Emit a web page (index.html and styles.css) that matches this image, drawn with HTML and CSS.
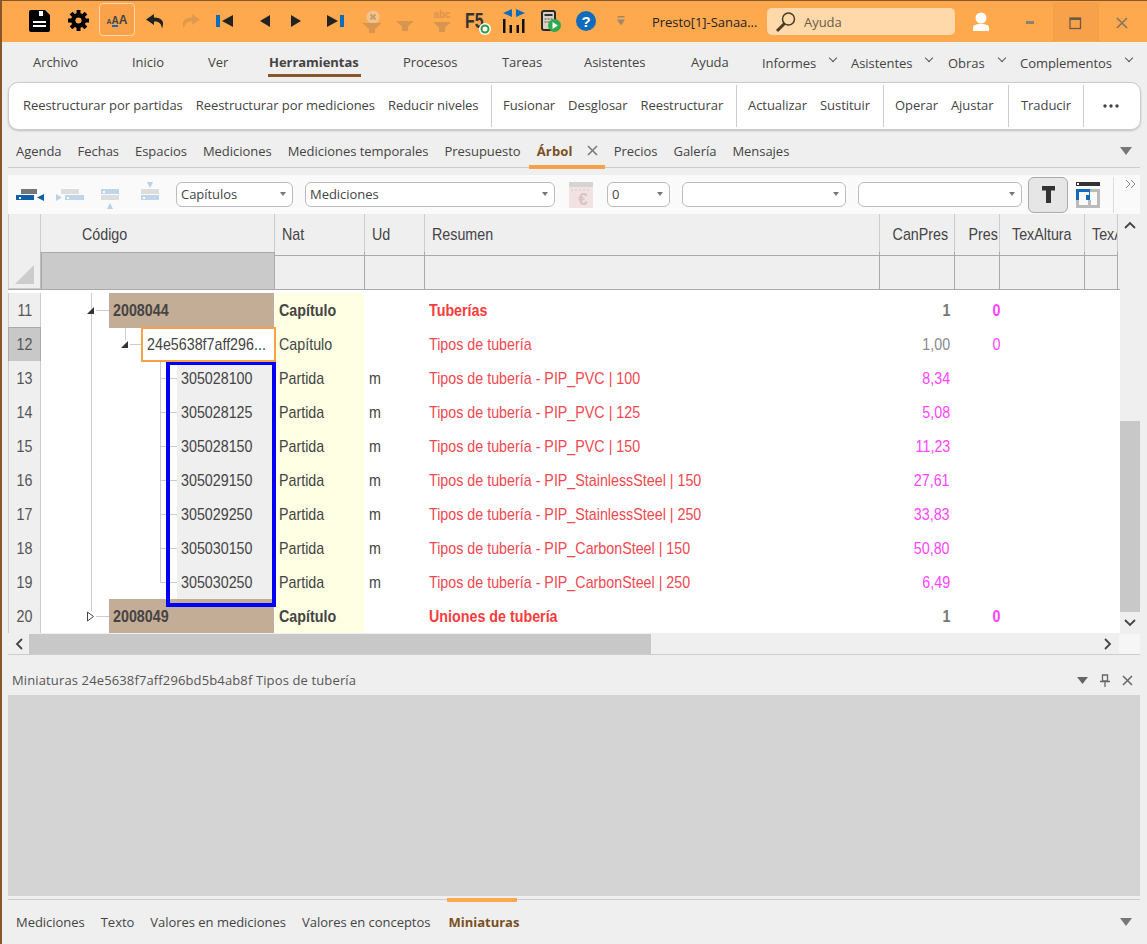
FILE: index.html
```html
<!DOCTYPE html>
<html lang="es">

<head>
    <meta charset="UTF-8">
    <title>Presto</title>
    <link rel="stylesheet" href="styles.css">
</head>

<body>
    <!-- title bar -->
    <header class="titlebar">
        <div class="quick-icons">
            <svg width="21" height="22" viewBox="0 0 21 22"><path d="M2 0h14l5 5v15a2 2 0 0 1-2 2H2a2 2 0 0 1-2-2V2a2 2 0 0 1 2-2z" fill="#000"/><rect x="10" y="1" width="4" height="5" fill="#fff"/><rect x="4" y="11" width="13" height="2" fill="#fff"/><rect x="4" y="15" width="13" height="2" fill="#fff"/></svg>
            <svg width="21" height="21" viewBox="0 0 24 24"><circle cx="12" cy="12" r="6" fill="none" stroke="#000" stroke-width="5"/><path d="M12 0v6M12 18v6M0 12h6M18 12h6M3.500 3.500l4 4M16.500 16.500l4 4M20.500 3.500l-4 4M7.500 16.500l-4 4" stroke="#000" stroke-width="4.500"/></svg>
            <div class="font-btn"><span class="aa1">A</span><span class="aa2">A</span><span class="aa3">A</span></div>
            <svg width="19" height="16" viewBox="0 0 19 16"><path d="M8 1 0 6.500 8 12V8.500c5 0 7 1.500 8 7 3-7 0-11-8-11z" fill="#222"/></svg>
            <svg width="19" height="16" viewBox="0 0 19 16"><path d="M11 1l8 5.500L11 12V8.500c-5 0-7 1.500-8 7-3-7 0-11 8-11z" fill="#e09a50"/></svg>
            <svg width="18" height="14" viewBox="0 0 18 14"><rect x="0" y="1" width="4" height="12" fill="#0f6cbd"/><path d="M17 1v12L6 7z" fill="#222"/></svg>
            <svg width="12" height="14" viewBox="0 0 12 14"><path d="M11 1v12L1 7z" fill="#222"/></svg>
            <svg width="12" height="14" viewBox="0 0 12 14"><path d="M1 1v12l10-6z" fill="#222"/></svg>
            <svg width="18" height="14" viewBox="0 0 18 14"><path d="M1 1v12l11-6z" fill="#222"/><rect x="14" y="1" width="4" height="12" fill="#0f6cbd"/></svg>
            <svg class="filter-x" width="20" height="24" viewBox="0 0 20 24"><circle cx="11" cy="7" r="6.500" fill="#eec592"/><path d="M8.500 4.500l5 5M13.500 4.500l-5 5" stroke="#cf9a60" stroke-width="2"/><path d="M0 13h20l-7 6v4H7v-4z" fill="#d8954f"/></svg>
            <svg class="filter-plain" width="18" height="10" viewBox="0 0 18 10"><path d="M0 0h18l-6 5.500V10H6V5.500z" fill="#d8954f"/></svg>
            <div class="abc-filter"><span class="abc">abc</span><svg width="18" height="10" viewBox="0 0 18 10"><path d="M0 0h18l-6 5.500V10H6V5.500z" fill="#d8954f"/></svg></div>
            <div class="f5"><span>F5</span><svg class="f5-badge" width="12" height="12" viewBox="0 0 12 12"><circle cx="6" cy="6" r="6" fill="#fff"/><circle cx="6" cy="6" r="3.500" fill="none" stroke="#2e9e3f" stroke-width="2"/></svg></div>
            <svg width="24" height="24" viewBox="0 0 24 24"><path d="M10 0v8L1 4zM14 0v8l9-4z" fill="#0f6cbd"/><path d="M1 10h2.500v14H1zM7.500 16H10v8H7.500zM14.500 16H17v8h-2.500zM20 10h2.500v14H20z" fill="#111"/></svg>
            <svg width="20" height="22" viewBox="0 0 20 22"><rect x="1" y="1" width="13" height="19" rx="2" fill="#d9d0c4" stroke="#2a2a2a" stroke-width="2"/><rect x="3.500" y="4" width="8" height="2" fill="#333"/><path d="M3.500 9h8M3.500 12h8" stroke="#555" stroke-dasharray="2 1"/><circle cx="13.500" cy="15.500" r="6.500" fill="#2fa84f"/><path d="M11.500 12v7l5.500-3.500z" fill="#fff"/></svg>
            <svg width="20" height="20" viewBox="0 0 20 20"><circle cx="10" cy="10" r="10" fill="#0f6cbd"/><text x="10" y="15.500" class="help-q">?</text></svg>
            <svg width="8" height="10" viewBox="0 0 8 10"><rect x="0.500" y="0" width="7" height="1.500" fill="#9a8a70"/><path d="M0 3.500h8L4 9.500z" fill="#9a8a70"/></svg>
        </div>
        <div class="doc-title">Presto[1]-Sanaa...</div>
        <div class="search">
            <svg width="22" height="22" viewBox="0 0 22 22"><circle cx="13.500" cy="8" r="6" fill="none" stroke="#4a3a28" stroke-width="1.500"/><path d="M9.500 12.500 2 20" stroke="#4a3a28" stroke-width="3"/></svg>
            <span>Ayuda</span>
        </div>
        <svg class="user-icon" width="18" height="20" viewBox="0 0 18 20"><circle cx="9" cy="6" r="5.500" fill="#fff"/><path d="M1 19v-3c0-3 3-4 8-4s8 1 8 4v3z" fill="#fff"/></svg>
        <div class="win-btn"><svg width="10" height="4" viewBox="0 0 10 4"><rect width="8" height="3" x="1" fill="#8d8172"/></svg></div>
        <div class="win-btn win-max"><svg width="14" height="13" viewBox="0 0 14 13"><rect x="1" y="1" width="10.500" height="10.500" fill="none" stroke="#6e5a43" stroke-width="1.300"/><rect x="1" y="1" width="10.500" height="2" fill="#6e5a43"/></svg></div>
        <div class="win-btn"><svg width="12" height="12" viewBox="0 0 12 12"><path d="M1 1l10 10M11 1 1 11" stroke="#857560" stroke-width="1.600"/></svg></div>
    </header>

    <!-- main menu -->
    <nav class="menu">
        <span>Archivo</span>
        <span>Inicio</span>
        <span>Ver</span>
        <span><b class="menu-active">Herramientas</b></span>
        <span>Procesos</span>
        <span>Tareas</span>
        <span>Asistentes</span>
        <span>Ayuda</span>
        <span class="menu-drop">Informes</span>
        <span class="menu-drop">Asistentes</span>
        <span class="menu-drop">Obras</span>
        <span class="menu-drop">Complementos</span>
    </nav>

    <!-- ribbon -->
    <div class="ribbon">
        <div class="ribbon-group group-a">
            <span>Reestructurar por partidas</span>
            <span>Reestructurar por mediciones</span>
            <span>Reducir niveles</span>
        </div>
        <div class="ribbon-group group-b">
            <span>Fusionar</span>
            <span>Desglosar</span>
            <span>Reestructurar</span>
        </div>
        <div class="ribbon-group group-c">
            <span>Actualizar</span>
            <span>Sustituir</span>
        </div>
        <div class="ribbon-group group-d">
            <span>Operar</span>
            <span>Ajustar</span>
        </div>
        <div class="ribbon-group group-e">
            <span>Traducir</span>
        </div>
        <div class="ribbon-more">
            <svg width="16" height="4" viewBox="0 0 16 4"><circle cx="2" cy="2" r="1.700" fill="#444"/><circle cx="8" cy="2" r="1.700" fill="#444"/><circle cx="14" cy="2" r="1.700" fill="#444"/></svg>
        </div>
    </div>

    <!-- document tabs -->
    <div class="tabs tabs-top">
        <span>Agenda</span>
        <span>Fechas</span>
        <span>Espacios</span>
        <span>Mediciones</span>
        <span>Mediciones temporales</span>
        <span>Presupuesto</span>
        <span class="tab-active"><b>Árbol</b><svg width="11" height="11" viewBox="0 0 11 11"><path d="M1 1l9 9M10 1l-9 9" stroke="#777" stroke-width="1.500"/></svg></span>
        <span>Precios</span>
        <span>Galería</span>
        <span>Mensajes</span>
        <svg class="tabs-arrow" width="14" height="8" viewBox="0 0 14 8"><path d="M1 0h12L7 8z" fill="#777"/></svg>
    </div>

    <!-- grid toolbar -->
    <div class="toolbar">
        <svg class="tool-1" width="28" height="29" viewBox="0 0 28 29"><rect x="5" y="9" width="16" height="5" fill="#777"/><rect y="15" width="18" height="5" fill="#0f5fa8"/><rect x="3" y="17" width="2" height="2" fill="#fff"/><path d="M28 14v7l-7-3.500z" fill="#0f5fa8"/></svg>
        <svg class="tool-2" width="28" height="29" viewBox="0 0 28 29"><rect x="5" y="9" width="18" height="5" fill="#ddd"/><path d="M0 14v7l6-3.500z" fill="#b8d3e8"/><rect x="9" y="15" width="19" height="5" fill="#bfd6ea"/><rect x="11" y="17" width="2" height="2" fill="#fff"/></svg>
        <svg class="tool-3" width="18" height="29" viewBox="0 0 18 29"><rect y="9" width="18" height="5" fill="#bfd6ea"/><rect x="2" y="11" width="2" height="2" fill="#fff"/><rect y="15" width="18" height="5" fill="#ddd"/><path d="M6 29l3-6 3 6z" fill="#b8d3e8"/></svg>
        <svg class="tool-4" width="18" height="29" viewBox="0 0 18 29"><path d="M6 2h6L9 8z" fill="#b8d3e8"/><rect y="9" width="18" height="5" fill="#ddd"/><rect y="15" width="18" height="5" fill="#bfd6ea"/><rect x="2" y="17" width="2" height="2" fill="#fff"/></svg>
        <div class="select select-cap">Capítulos</div>
        <div class="select select-med">Mediciones</div>
        <svg class="tool-euro" width="24" height="26" viewBox="0 0 24 26"><rect width="24" height="26" fill="#f3e2e2"/><rect width="24" height="5" fill="#d4d4d4"/><path d="M2 8h20" stroke="#ccc" stroke-dasharray="2 2"/><text x="14" y="23" class="euro">€</text></svg>
        <div class="select select-num">0</div>
        <div class="select select-wide"></div>
        <div class="select select-wide"></div>
        <div class="t-btn">
            <svg width="13" height="17" viewBox="0 0 13 17"><path d="M0 0h13v4.500H9V17H4V4.500H0z" fill="#333"/></svg>
        </div>
        <svg class="tool-view" width="24" height="26" viewBox="0 0 24 26"><rect width="24" height="4" fill="#333"/><rect x="1" y="1" width="2" height="2" fill="#fff"/><path d="M0 18h3v5h9v-5h3v5h6V10h-7V7h10v19H0z" fill="#bbb"/><path d="M0 7h14v11h-4v-5h3v-3H3v8H0z" fill="#0f6cbd"/></svg>
        <div class="tool-sep"></div>
        <svg class="tool-more" width="12" height="10" viewBox="0 0 12 10"><path d="M1 1l4 4-4 4M6 1l4 4-4 4" fill="none" stroke="#888"/></svg>
    </div>

    <!-- tree grid -->
    <div class="grid-area">
        <div class="grid-main">
            <div class="grid-row grid-head">
                <div class="row-num"></div>
                <div class="col-code"><span class="t">Código</span></div>
                <div><span class="t">Nat</span></div>
                <div><span class="t">Ud</span></div>
                <div><span class="t">Resumen</span></div>
                <div class="num"><span class="t">CanPres</span></div>
                <div class="num num-pres"><span class="t">Pres</span></div>
                <div class="tex tex-first"><span class="t">TexAltura</span></div>
                <div class="tex"><span class="t">TexA</span></div>
            </div>
            <div class="grid-row grid-filter">
                <div class="row-num corner"><svg width="19" height="19" viewBox="0 0 19 19"><path d="M19 0v19H0z" fill="#ccc"/></svg></div>
                <div class="filter-code"></div>
                <div></div>
                <div></div>
                <div></div>
                <div></div>
                <div></div>
                <div></div>
                <div></div>
            </div>

            <div class="grid-body">
                <div class="tree-line v-main"></div>
                <div class="tree-line v-sub"></div>
                <div class="tree-line v-leaf"></div>

                <div class="grid-row row-chapter">
                    <div class="row-num"><span class="t">11</span></div>
                    <div class="code-cell level-1"><i class="twist"></i><i class="stub"></i><span class="code-box chapter-box"><span class="t">2008044</span></span></div>
                    <div class="nat"><span class="t">Capítulo</span></div>
                    <div></div>
                    <div class="res"><span class="t">Tuberías</span></div>
                    <div class="num can"><span class="t">1</span></div>
                    <div class="num pres"><span class="t">0</span></div>
                </div>
                <div class="grid-row row-sub">
                    <div class="row-num row-num-sel"><span class="t">12</span></div>
                    <div class="code-cell level-2"><i class="twist"></i><i class="stub"></i><span class="code-box selected-box"><span class="t">24e5638f7aff296...</span></span></div>
                    <div class="nat"><span class="t">Capítulo</span></div>
                    <div></div>
                    <div class="res"><span class="t">Tipos de tubería</span></div>
                    <div class="num can"><span class="t">1,00</span></div>
                    <div class="num pres"><span class="t">0</span></div>
                </div>
                <div class="grid-row">
                    <div class="row-num"><span class="t">13</span></div>
                    <div class="code-cell level-3"><i class="stub"></i><span class="code-box leaf-box"><span class="t">305028100</span></span></div>
                    <div class="nat"><span class="t">Partida</span></div>
                    <div class="ud"><span class="t">m</span></div>
                    <div class="res"><span class="t">Tipos de tubería - PIP_PVC | 100</span></div>
                    <div class="num can-leaf"><span class="t">8,34</span></div>
                    <div></div>
                </div>
                <div class="grid-row">
                    <div class="row-num"><span class="t">14</span></div>
                    <div class="code-cell level-3"><i class="stub"></i><span class="code-box leaf-box"><span class="t">305028125</span></span></div>
                    <div class="nat"><span class="t">Partida</span></div>
                    <div class="ud"><span class="t">m</span></div>
                    <div class="res"><span class="t">Tipos de tubería - PIP_PVC | 125</span></div>
                    <div class="num can-leaf"><span class="t">5,08</span></div>
                    <div></div>
                </div>
                <div class="grid-row">
                    <div class="row-num"><span class="t">15</span></div>
                    <div class="code-cell level-3"><i class="stub"></i><span class="code-box leaf-box"><span class="t">305028150</span></span></div>
                    <div class="nat"><span class="t">Partida</span></div>
                    <div class="ud"><span class="t">m</span></div>
                    <div class="res"><span class="t">Tipos de tubería - PIP_PVC | 150</span></div>
                    <div class="num can-leaf"><span class="t">11,23</span></div>
                    <div></div>
                </div>
                <div class="grid-row">
                    <div class="row-num"><span class="t">16</span></div>
                    <div class="code-cell level-3"><i class="stub"></i><span class="code-box leaf-box"><span class="t">305029150</span></span></div>
                    <div class="nat"><span class="t">Partida</span></div>
                    <div class="ud"><span class="t">m</span></div>
                    <div class="res"><span class="t">Tipos de tubería - PIP_StainlessSteel | 150</span></div>
                    <div class="num can-leaf"><span class="t">27,61</span></div>
                    <div></div>
                </div>
                <div class="grid-row">
                    <div class="row-num"><span class="t">17</span></div>
                    <div class="code-cell level-3"><i class="stub"></i><span class="code-box leaf-box"><span class="t">305029250</span></span></div>
                    <div class="nat"><span class="t">Partida</span></div>
                    <div class="ud"><span class="t">m</span></div>
                    <div class="res"><span class="t">Tipos de tubería - PIP_StainlessSteel | 250</span></div>
                    <div class="num can-leaf"><span class="t">33,83</span></div>
                    <div></div>
                </div>
                <div class="grid-row">
                    <div class="row-num"><span class="t">18</span></div>
                    <div class="code-cell level-3"><i class="stub"></i><span class="code-box leaf-box"><span class="t">305030150</span></span></div>
                    <div class="nat"><span class="t">Partida</span></div>
                    <div class="ud"><span class="t">m</span></div>
                    <div class="res"><span class="t">Tipos de tubería - PIP_CarbonSteel | 150</span></div>
                    <div class="num can-leaf"><span class="t">50,80</span></div>
                    <div></div>
                </div>
                <div class="grid-row">
                    <div class="row-num"><span class="t">19</span></div>
                    <div class="code-cell level-3"><i class="stub"></i><span class="code-box leaf-box"><span class="t">305030250</span></span></div>
                    <div class="nat"><span class="t">Partida</span></div>
                    <div class="ud"><span class="t">m</span></div>
                    <div class="res"><span class="t">Tipos de tubería - PIP_CarbonSteel | 250</span></div>
                    <div class="num can-leaf"><span class="t">6,49</span></div>
                    <div></div>
                </div>
                <div class="grid-row row-chapter">
                    <div class="row-num"><span class="t">20</span></div>
                    <div class="code-cell level-1"><svg class="twist-closed" width="7" height="11" viewBox="0 0 7 11"><path d="M.5 1v9l6-4.500z" fill="#fff" stroke="#444"/></svg><i class="stub"></i><span class="code-box chapter-box"><span class="t">2008049</span></span></div>
                    <div class="nat"><span class="t">Capítulo</span></div>
                    <div></div>
                    <div class="res"><span class="t">Uniones de tubería</span></div>
                    <div class="num can"><span class="t">1</span></div>
                    <div class="num pres"><span class="t">0</span></div>
                </div>

                <!-- annotation drawn on the screenshot -->
                <div class="blue-mark"></div>
            </div>
        </div>

        <div class="vscroll">
            <div class="vscroll-btn"><svg width="12" height="8" viewBox="0 0 12 8"><path d="M1 7l5-5 5 5" fill="none" stroke="#444" stroke-width="1.800"/></svg></div>
            <div class="vscroll-track"><div class="vscroll-thumb"></div></div>
            <div class="vscroll-btn"><svg width="12" height="8" viewBox="0 0 12 8"><path d="M1 1l5 5 5-5" fill="none" stroke="#444" stroke-width="1.800"/></svg></div>
        </div>
    </div>

    <div class="hscroll">
        <div class="hscroll-btn"><svg width="8" height="12" viewBox="0 0 8 12"><path d="M7 1 2 6l5 5" fill="none" stroke="#444" stroke-width="1.800"/></svg></div>
        <div class="hscroll-thumb"></div>
        <div class="hscroll-rest"><svg width="8" height="12" viewBox="0 0 8 12"><path d="M1 1l5 5-5 5" fill="none" stroke="#444" stroke-width="1.800"/></svg></div>
        <div class="hscroll-corner"></div>
    </div>

    <!-- thumbnails panel -->
    <div class="panel-head">
        <span class="panel-title">Miniaturas 24e5638f7aff296bd5b4ab8f Tipos de tubería</span>
        <div class="panel-icons">
            <svg width="11" height="7" viewBox="0 0 11 7"><path d="M0 0h11L5.500 7z" fill="#666"/></svg>
            <svg width="10" height="13" viewBox="0 0 10 13"><path d="M2.500 1h5v6h-5zM0 7.500h10M5 8v5" fill="none" stroke="#666" stroke-width="1.300"/></svg>
            <svg width="11" height="11" viewBox="0 0 11 11"><path d="M1 1l9 9M10 1l-9 9" stroke="#666" stroke-width="1.500"/></svg>
        </div>
    </div>
    <div class="panel-body"></div>

    <div class="tabs tabs-bottom">
        <span>Mediciones</span>
        <span>Texto</span>
        <span>Valores en mediciones</span>
        <span>Valores en conceptos</span>
        <span class="tab-active"><b>Miniaturas</b></span>
        <svg class="tabs-arrow" width="14" height="8" viewBox="0 0 14 8"><path d="M1 0h12L7 8z" fill="#777"/></svg>
    </div>
</body>

</html>
```

FILE: styles.css
```css
html, body {
    margin: 0;
    padding: 0;
}

body {
    width: 1147px;
    height: 944px;
    overflow: hidden;
    box-sizing: border-box;
    border-left: 2px solid #85572a;
    background-color: #efefef;
    font-family: "Open Sans", "Noto Sans", sans-serif;
    font-size: 13px;
    letter-spacing: -0.05px;
    color: #444;
}

svg {
    display: block;
    flex: none;
}

/* title bar */
.titlebar {
    height: 42px;
    box-sizing: border-box;
    border-top: 1px solid #85572a;
    background-color: #ffa94f;
    margin-left: -2px;
    padding-left: 2px;
    display: flex;
    align-items: center;
}

.quick-icons {
    width: 638px;
    height: 41px;
    flex: none;
    display: grid;
    /* columns are sized so each icon centre lands under the original one */
    grid-template-columns: 40px 38px 40px 36px 34px 36px 44px 18px 60px 14px 52px 22px 50px 22px 52px 18px 52px;
    padding: 0 0 2px 17px;
    box-sizing: border-box;
    align-items: center;
    justify-items: center;
}

.font-btn {
    width: 36px;
    height: 33px;
    border: 1px solid #ffd9ad;
    border-radius: 4px;
    background-color: #f9a24a;
    display: flex;
    align-items: baseline;
    justify-content: center;
    line-height: 32px;
    font-family: "Liberation Sans", sans-serif;
    font-weight: bold;
    color: #444;
    box-sizing: border-box;
    background-image: linear-gradient(#0f6cbd, #0f6cbd);
    background-size: 6px 2px;
    background-position: 12px 21px;
    background-repeat: no-repeat;
    margin-bottom: 2px;
}

.aa1 { font-size: 7px; }
.aa2 { font-size: 10px; }
.aa3 { font-size: 12px; }

.filter-plain {
    margin-top: 10px;
}

.filter-x {
    margin-top: 2px;
}

.abc-filter {
    display: flex;
    flex-direction: column;
    align-items: center;
    gap: 2px;
}

.abc {
    font-family: "Liberation Sans", sans-serif;
    font-weight: bold;
    font-size: 10px;
    line-height: 10px;
    color: #d8954f;
}

.f5 {
    position: relative;
    font-family: "Liberation Sans", sans-serif;
    font-weight: bold;
    font-size: 22px;
    line-height: 22px;
    color: #333;
}

.f5 span {
    display: inline-block;
    transform: scaleX(0.72);
    transform-origin: left center;
}

.f5-badge {
    position: absolute;
    right: 0;
    bottom: -3px;
}

.help-q {
    font-family: "Liberation Sans", sans-serif;
    font-weight: bold;
    font-size: 15px;
    fill: #fff;
    text-anchor: middle;
}

.euro {
    font-family: "Liberation Sans", sans-serif;
    font-weight: bold;
    font-size: 17px;
    fill: #d9c3c3;
    text-anchor: middle;
}

.doc-title {
    width: 115px;
    flex: none;
    margin-left: 12px;
    color: #222;
    white-space: nowrap;
}

.search {
    width: 188px;
    height: 27px;
    flex: none;
    box-sizing: border-box;
    background-color: #ffd9aa;
    border-radius: 5px;
    display: flex;
    align-items: center;
    gap: 7px;
    padding-left: 8px;
    color: #6b5a45;
}

.user-icon {
    margin-left: 17px;
    margin-right: 17px;
}

.win-btn {
    width: 46px;
    height: 39px;
    flex: none;
    display: flex;
    align-items: center;
    justify-content: center;
    padding-top: 3px;
    box-sizing: border-box;
}

.win-max {
    background-color: #f7a24a;
}

/* menu */
.menu {
    height: 40px;
    display: grid;
    grid-template-columns: 99px 76px 61px 134px 99px 82px 107px 71px 89px 97px 72px 1fr;
    padding-left: 31px;
    align-items: center;
}

.menu span {
    white-space: nowrap;
    margin-top: -1px;
}

.menu-active {
    display: inline-block;
    position: relative;
}

.menu-active::after {
    content: "";
    position: absolute;
    left: -1px;
    right: -2px;
    bottom: -6px;
    height: 3px;
    background-color: #85572a;
}

.menu .menu-drop {
    margin-top: 1px;
}

.menu-drop::after {
    content: "";
    display: inline-block;
    width: 5px;
    height: 5px;
    border-right: 1.500px solid #555;
    border-bottom: 1.500px solid #555;
    transform: rotate(45deg);
    margin-left: 14px;
    position: relative;
    top: -7px;
}

/* ribbon */
.ribbon {
    height: 48px;
    margin: 0 6px;
    box-sizing: border-box;
    background-color: #fff;
    border: 1px solid #ccc;
    border-radius: 10px;
    box-shadow: 0 1px 2px rgba(0, 0, 0, 0.2);
    display: flex;
    align-items: stretch;
}

.ribbon-group {
    display: flex;
    align-items: center;
    gap: 13px;
    padding: 0 12px 2px 14px;
    white-space: nowrap;
    margin: 2px 0;
    border-right: 1px solid #ccc;
    box-sizing: border-box;
}

.group-a { width: 483px; }
.group-b { width: 245px; padding-left: 11px; }
.group-c { width: 147px; padding-left: 11px; }
.group-d { width: 125px; padding-left: 11px; }
.group-e { width: 75px; padding-left: 12px; }

.ribbon-more {
    flex: 1;
    display: flex;
    align-items: center;
    justify-content: center;
    padding-right: 3px;
}

/* tabs */
.tabs {
    display: flex;
    align-items: center;
    gap: 16px;
    width: 1132px;
    margin-left: 6px;
    padding: 4px 0 0 8px;
    box-sizing: border-box;
    position: relative;
    white-space: nowrap;
    letter-spacing: -0.03px;
}

.tabs-top {
    height: 38px;
    border-bottom: 1px solid #ccc;
}

.tabs .tabs-arrow {
    position: absolute;
    right: 7px;
    top: 50%;
    margin-top: -2px;
}

.tab-active {
    align-self: stretch;
    display: flex;
    align-items: center;
    gap: 14px;
    position: relative;
    color: #7a4f24;
    letter-spacing: 0.2px;
}

.tabs-top .tab-active::after {
    content: "";
    position: absolute;
    left: -8px;
    right: -7px;
    bottom: -2px;
    height: 4px;
    background-color: #f7a24a;
}

.tabs-bottom {
    height: 48px;
    background: linear-gradient(#ccc, #ccc) 0 3px / 100% 1px no-repeat;
}

.tabs-bottom .tab-active {
    letter-spacing: 0;
    margin-left: 2px;
}

.tabs-bottom .tab-active::after {
    content: "";
    position: absolute;
    left: -1px;
    width: 70px;
    top: -2px;
    height: 4px;
    background-color: #ffa94f;
}

/* toolbar */
.toolbar {
    height: 39px;
    margin: 7px 0 0 6px;
    width: 1132px;
    background-color: #fafafa;
    display: flex;
    align-items: center;
    position: relative;
}

.tool-1 { margin-left: 8px; }
.tool-2 { margin-left: 12px; }
.tool-3 { margin-left: 17px; }
.tool-4 { margin-left: 22px; }
.tool-euro { margin-left: 14px; margin-right: 14px; }
.tool-view { margin-left: 8px; }

.select {
    height: 25px;
    box-sizing: border-box;
    border: 1px solid #bbb;
    border-radius: 6px;
    background-color: #fff;
    line-height: 23px;
    padding-left: 4px;
    position: relative;
    color: #444;
}

.select::after {
    content: "";
    position: absolute;
    right: 6px;
    top: 9px;
    border-left: 3px solid transparent;
    border-right: 3px solid transparent;
    border-top: 4px solid #777;
}

.select-cap { width: 117px; margin-left: 17px; }
.select-med { width: 250px; margin-left: 12px; }
.select-num { width: 63px; margin-right: 12px; }
.select-wide { width: 164px; margin-right: 12px; }

.t-btn {
    width: 40px;
    height: 36px;
    margin-left: -6px;
    box-sizing: border-box;
    border: 1px solid #aaa;
    border-radius: 6px;
    background-color: #e6e6e6;
    display: flex;
    align-items: center;
    justify-content: center;
}

.tool-sep {
    width: 1px;
    height: 36px;
    background-color: #ddd;
    margin-left: 13px;
}

.tool-more {
    position: absolute;
    right: 3px;
    top: 4px;
}

/* tree grid */
.grid-area {
    display: flex;
    margin-left: 6px;
    width: 1132px;
    height: 419px;
    background-color: #fff;
}

.grid-main {
    width: 1112px;
    overflow: hidden;
    font-family: "Liberation Sans", sans-serif;
    font-size: 17px;
    letter-spacing: 0;
    color: #444;
}

/* the original grid font is a condensed Arial */
.t {
    display: inline-block;
    transform: scaleX(0.84);
    transform-origin: left center;
}

.num .t {
    transform-origin: right center;
}

.row-num .t {
    transform-origin: center center;
}

.grid-row {
    display: grid;
    grid-template-columns: 33px 234px 90px 60px 455px 75px 45px 85px 33px;
    height: 34px;
}

.grid-row > div {
    box-sizing: border-box;
    line-height: 35px;
    padding-left: 4px;
    white-space: nowrap;
}

.grid-row > .num {
    text-align: right;
    padding-left: 0;
    padding-right: 5px;
}

.grid-row > .pres {
    padding-right: 0;
}

.grid-head {
    height: 38px;
    background-color: #efefef;
}

.grid-row.grid-head > div {
    line-height: 41px;
    padding-left: 7px;
    border-right: 1px solid #ccc;
    border-bottom: 1px solid #aaa;
}

.grid-row.grid-head > .num {
    padding-left: 0;
    padding-right: 6px;
}

.grid-row.grid-head > .num-pres {
    padding-right: 1px;
}

.grid-head > .row-num {
    border-right: 1px solid #bbb;
    border-left: 1px solid #ccc;
    border-bottom: none;
    border-top: 1px solid #ccc;
    padding: 0;
}

.grid-row.grid-head > .col-code {
    padding-left: 41px;
}

.grid-head > .tex {
    overflow: hidden;
}

.grid-row.grid-head > .tex-first {
    padding-left: 12px;
}

.grid-filter {
    height: 38px;
    background-color: #efefef;
    border-bottom: 1px solid #aaa;
    margin-bottom: 3px;
    box-sizing: border-box;
}

.grid-filter > div {
    border-right: 1px solid #aaa;
}

.grid-row.grid-filter > .corner {
    border-left: 1px solid #ccc;
    border-right: 1px solid #bbb;
    padding: 13px 0 0 6px;
}

.grid-filter > .filter-code {
    background-color: #cacaca;
    border: 1px solid #aaa;
    border-bottom: none;
}

.grid-body {
    position: relative;
}

.grid-row > .row-num {
    background-color: #efefef;
    border: 1px solid #ccc;
    border-top: none;
    text-align: center;
    padding: 0;
    color: #555;
}

.grid-row > .row-num-sel {
    background-color: #c8c8c8;
    border: 1px solid #aaa;
    line-height: 33px;
}

.grid-row > .code-cell {
    display: flex;
    align-items: center;
    padding: 0 0 1px 0;
    position: relative;
}

.grid-row > .level-1 { padding-left: 46px; }
.grid-row > .level-2 { padding-left: 80px; }
.grid-row > .level-3 { padding-left: 119px; }

.twist {
    width: 0;
    height: 0;
    flex: none;
    margin-right: 2px;
    border-left: 7px solid transparent;
    border-bottom: 7px solid #333;
}

.twist-closed {
    margin-right: 2px;
}

.stub {
    height: 1px;
    flex: none;
    width: 11px;
    background-color: #ccc;
}

.level-1 .stub {
    width: 13px;
}

.level-3 .stub {
    width: 17px;
}

.code-box {
    height: 100%;
    box-sizing: border-box;
    display: block;
    line-height: 35px;
    white-space: nowrap;
    padding-left: 4px;
}

.chapter-box {
    width: 165px;
    background-color: #c4ad96;
    font-weight: bold;
}

.selected-box {
    width: 135px;
    height: 35px;
    margin: -1px -2px 0 0;
    background-color: #fff;
    border: 2px solid #f7a24a;
    line-height: 32px;
    z-index: 1;
}

.leaf-box {
    width: 95px;
    background-color: #efefef;
}

.grid-row > .nat {
    background-color: #ffffe3;
    margin: 0 1px 1px 0;
    line-height: 35px;
}

.row-chapter .nat {
    font-weight: bold;
}

.res {
    color: #f0484f;
}

.row-chapter .res {
    color: #f83c3c;
    font-weight: bold;
}

.can {
    color: #8a8a8a;
}

.row-chapter .can {
    color: #777;
    font-weight: bold;
}

.pres,
.can-leaf {
    color: #ff44ff;
}

.row-chapter .pres {
    font-weight: bold;
}

.tree-line {
    position: absolute;
    width: 1px;
    background-color: #ccc;
}

.v-main {
    left: 83px;
    top: 0;
    height: 318px;
}

.v-sub {
    left: 117px;
    top: 34px;
    height: 13px;
}

.v-leaf {
    left: 152px;
    top: 68px;
    height: 221px;
}

.blue-mark {
    position: absolute;
    left: 158px;
    top: 68px;
    width: 110px;
    height: 246px;
    box-sizing: border-box;
    border: 4px solid #0000f5;
}

/* scrollbars */
.vscroll {
    width: 20px;
    background-color: #efefef;
    display: flex;
    flex-direction: column;
}

.vscroll-btn {
    height: 21px;
    display: flex;
    align-items: center;
    justify-content: center;
    flex: none;
}

.vscroll-track {
    flex: 1;
    display: flex;
    flex-direction: column;
    justify-content: flex-end;
}

.vscroll-thumb {
    height: 191px;
    background-color: #c8c8c8;
}

.hscroll {
    display: flex;
    height: 20px;
    margin: 1px 0 0 6px;
    width: 1132px;
}

.hscroll-btn {
    width: 21px;
    flex: none;
    display: flex;
    align-items: center;
    justify-content: center;
    background-color: #efefef;
}

.hscroll-thumb {
    width: 622px;
    flex: none;
    background-color: #c8c8c8;
}

.hscroll-rest {
    flex: 1;
    display: flex;
    align-items: center;
    justify-content: flex-end;
    padding-right: 7px;
}

.hscroll-corner {
    width: 21px;
    background-color: #f6f6f6;
}

/* panel */
.panel-head {
    height: 41px;
    margin-left: 6px;
    width: 1132px;
    box-sizing: border-box;
    border-top: 1px solid #ccc;
    padding: 10px 0 0 4px;
    display: flex;
    align-items: center;
    justify-content: space-between;
    color: #555;
}

.panel-title {
    letter-spacing: 0.13px;
}

.panel-icons {
    display: flex;
    align-items: center;
    gap: 12px;
    padding-right: 7px;
}

.panel-body {
    height: 201px;
    margin-left: 6px;
    width: 1132px;
    background-color: #d4d4d4;
}
```
